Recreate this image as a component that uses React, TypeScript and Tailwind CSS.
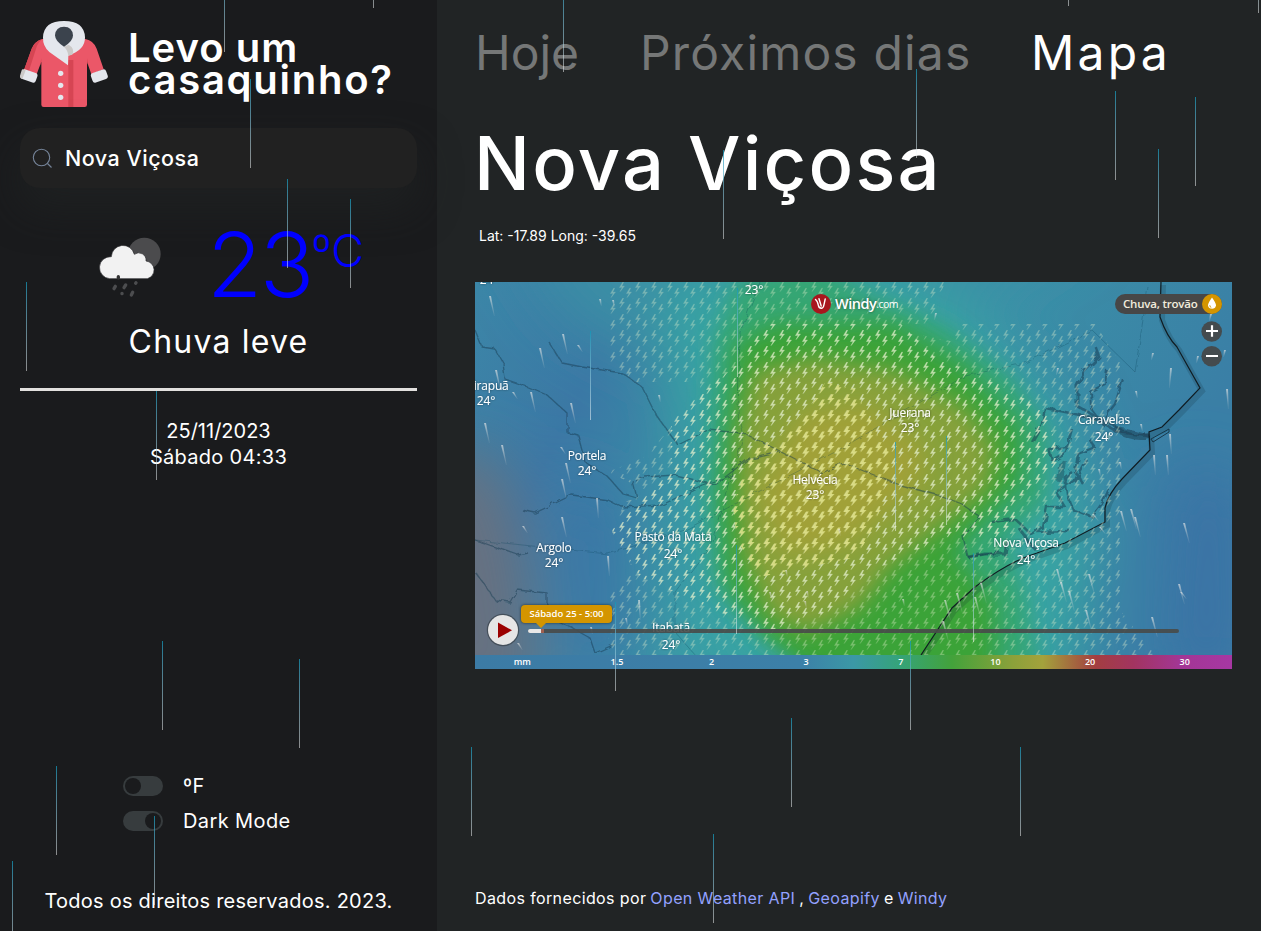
const drops: [number, number][] = [
  [224, -37], [373, -81], [250, 79], [287, 179], [350, 199], [26, 282], [156, 391], [162, 641],
  [299, 659], [56, 766], [154, 816], [12, 861], [563, -17], [916, 69], [1068, -83], [1258, -76],
  [1115, 91], [1195, 97], [1158, 149], [723, 150], [590, 331], [737, 288], [895, 442], [946, 436],
  [736, 545], [615, 602], [973, 553], [910, 641], [791, 718], [471, 747], [1020, 747], [713, 834],
];

function Rain() {
  return (
    <div className="pointer-events-none absolute inset-0 overflow-hidden">
      {drops.map(([x, y]) => (
        <i
          key={`${x}-${y}`}
          className="absolute h-[89px] w-px bg-linear-to-b from-[#0d98ba]/75 to-white/50"
          style={{ left: x, top: y }}
        />
      ))}
    </div>
  );
}

function Coat() {
  return (
    <svg viewBox="30 30 264 264" className="h-[88px] w-[88px] shrink-0">
      <path d="M97 87Q73 95 65 116L42 180L80 193L94 155V284Q94 291 101 291H224Q231 291 231 284V155L244 193L281 178L260 116Q251 92 226 87Z" fill="#eb5768" />
      <path d="M97 87Q73 95 65 116L42 180L56 185L78 116Q83 98 97 87ZM94 145V155L89 170ZM231 145V155L236 170ZM175 150H190V291H175Z" fill="#d64553" />
      <rect x="-24" y="-15" width="48" height="30" rx="8" transform="translate(57 198) rotate(19)" fill="#e4e7ed" />
      <path d="M38 178L47 181L37 207L34 206Q29 203 30 197L35 181Q36 178 38 178Z" fill="#cbc9c8" />
      <rect x="-24" y="-15" width="48" height="30" rx="8" transform="translate(268 198) rotate(-19)" fill="#e4e7ed" />
      <path d="M174 166L118 126Q98 109 99 82Q101 33 162 33Q223 33 225 82Q226 120 175 137Z" fill="#e4e7ed" />
      <path d="M162 110L176 104Q196 116 187 134L175 137V137Q174 122 162 110Z" fill="#cbc9c8" />
      <path d="M162 110Q135 93 135 76Q137 50 162 50Q187 50 189 76Q189 94 162 110Z" fill="#3b434d" />
      <circle cx="152" cy="190" r="8" fill="#e4e7ed" />
      <circle cx="152" cy="226" r="8" fill="#e4e7ed" />
      <circle cx="152" cy="262" r="8" fill="#e4e7ed" />
    </svg>
  );
}

function Cloud() {
  return (
    <svg viewBox="0 0 270 240" className="h-[80px] w-[90px] shrink-0">
      <circle cx="163" cy="87" r="49" fill="#4b4b4d" />
      <path d="M59 161A33 33 0 0 1 64 95A35 35 0 0 1 133 88A22 22 0 0 1 168 108A27 27 0 0 1 172 161Z" fill="#f2f2f2" stroke="#2a2b2d" strokeWidth="2" />
      <g stroke="#4c4d4f" strokeWidth="10" strokeLinecap="round">
        <path d="M76 184L72 191M107 180L102 188M138 173L137 175M96 205V206M128 202L124 210" />
      </g>
      <path d="M85 155L85 159" stroke="#333" strokeWidth="10" strokeLinecap="round" />
    </svg>
  );
}

function Toggle({ on, label }: { on?: boolean; label: string }) {
  return (
    <div className="flex h-[35px] items-center gap-5">
      <span className={on ? "flex h-5 w-10 justify-end rounded-full bg-[#373c3e] p-[2px]" : "flex h-5 w-10 rounded-full bg-[#373c3e] p-[2px]"}>
        <span className="h-4 w-4 rounded-full bg-[#1a1b1d]" />
      </span>
      <span className="text-[20px] tracking-[0.4px]">{label}</span>
    </div>
  );
}

const bolt = "M1-4.8L-2.2.5L.6.3L-1.6 4.6L2.7-.9L0-.7L1.9-4.8Z";
const bigBolt = "M.6-5L-3.2.9L-.3.9L-2.2 5.4L3.8-1.3L1-1.3L3-5Z";

const streaks: [number, number, number][] = [
  [15, 14, 1], [88, 52, 1], [103, 63, 0], [125, 17, 0], [21, 88, 1], [38, 110, 0], [65, 66, 1], [56, 110, 1],
  [96, 121, 1], [10, 141, 1], [27, 163, 1], [86, 165, 0], [91, 181, 1], [138, 18, 0], [87, 197, 1], [122, 216, 1],
  [87, 235, 1], [48, 244, 0], [133, 274, 1], [164, 318, 1], [151, 336, 0], [116, 345, 0], [43, 361, 0], [184, 113, 0],
  [330, 319, 0], [295, 310, 0], [332, 309, 0], [311, 288, 0], [364, 247, 0], [428, 317, 0], [470, 318, 1], [482, 311, 1],
  [506, 301, 1], [500, 315, 1], [468, 339, 1], [582, 287, 1], [586, 300, 1], [594, 309, 1], [614, 292, 1], [611, 328, 1],
  [646, 229, 1], [656, 227, 1], [660, 235, 1], [709, 241, 1], [704, 302, 1], [706, 310, 0], [677, 335, 1], [618, 232, 0],
  [625, 245, 0], [624, 187, 0], [645, 180, 0], [679, 173, 1], [692, 173, 1], [695, 152, 1], [666, 142, 0], [661, 109, 0],
  [678, 71, 0], [696, 86, 1], [723, 74, 0], [752, 107, 1], [750, 68, 0], [461, 31, 0], [583, 86, 0], [736, 32, 0],
];

function MapLabel({ name, x, y, t = 24, gap = 15 }: { name?: string; x: number; y: number; t?: number; gap?: number }) {
  return (
    <>
      {name && <text x={x} y={y}>{name}</text>}
      <text x={x} y={y + gap}>{t}°</text>
    </>
  );
}

function MapCanvas() {
  return (
    <svg viewBox="0 0 757 373" className="block h-[373px] w-[757px]">
      <defs>
        <filter id="b10" x="-30%" y="-30%" width="160%" height="160%"><feGaussianBlur stdDeviation="11" /></filter>
        <filter id="b14" x="-30%" y="-30%" width="160%" height="160%"><feGaussianBlur stdDeviation="13" /></filter>
        <filter id="b30" x="-50%" y="-50%" width="200%" height="200%"><feGaussianBlur stdDeviation="30" /></filter>
        <filter id="ts" x="-30%" y="-50%" width="160%" height="200%"><feDropShadow dx="0" dy="0" stdDeviation=".9" floodColor="#000" floodOpacity=".5" /></filter>
        <filter id="rough" x="-5%" y="-5%" width="110%" height="110%"><feTurbulence type="fractalNoise" baseFrequency=".12" numOctaves="2" /><feDisplacementMap in="SourceGraphic" scale="6" /></filter>
        <pattern id="small" width="16" height="16" patternUnits="userSpaceOnUse">
          <path d={bolt} transform="translate(2.7 5)" fill="#e6f0cd" stroke="#e6f0cd" strokeWidth=".35" />
          <path d={bolt} transform="translate(9.7 11)" fill="#e6f0cd" stroke="#e6f0cd" strokeWidth=".35" />
        </pattern>
        <pattern id="large" width="16" height="16" patternUnits="userSpaceOnUse">
          <path d={bigBolt} transform="translate(3.7 5.2)" fill="#e3e58d" />
          <path d={bigBolt} transform="translate(10.7 10.6)" fill="#e3e58d" />
        </pattern>
        <linearGradient id="streak" x1="0" y1="0" x2="0" y2="1"><stop offset="0" stopColor="#e8e8e8" stopOpacity=".65" /><stop offset="1" stopColor="#d0d0d0" stopOpacity=".08" /></linearGradient>
        <linearGradient id="sea" x1="0" y1="0" x2="1" y2=".25"><stop offset="0" stopColor="#3c86a7" /><stop offset=".2" stopColor="#3b78a5" /><stop offset=".5" stopColor="#3b99a7" /><stop offset="1" stopColor="#3a7fa6" /></linearGradient>
      </defs>
      <rect width="757" height="373" fill="url(#sea)" />
      <g filter="url(#b30)">
        <path d="M-60 170L20 170L50 260L70 430L-60 430Z" fill="#687180" />
        <path d="M30 -60H620L430 45L230 110L90 35Z" fill="#3a8ea5" />
        <path d="M80 180L140 220L150 400L100 400Z" fill="#3b73a6" />
        <path d="M700 180L770 200V400L690 400Z" fill="#3a72a5" />
        <path d="M190 -10H440L590 130L620 250L600 420H240L215 300L200 120Z" fill="#39a4a3" />
      </g>
      <path d="M262 0L340 -20L400 15L470 45L535 95L572 150L570 220L530 260L550 310L562 390L350 400L285 350L240 300L233 210L240 60Z" fill="#34a673" filter="url(#b10)" />
      <path d="M262 62L300 42L420 42L490 85L544 145L545 200L505 240L480 270L520 320L520 400H345L295 355L256 310L246 220Z" fill="#3ba337" filter="url(#b10)" />
      <path d="M278 88L340 76L420 88L490 125L520 165L512 208L460 250L415 285L385 325L335 350L295 335L268 270L262 160Z" fill="#86a13a" filter="url(#b10)" />
      <path d="M325 130L390 120L450 165L445 205L370 265L310 275L280 215Z" fill="#a1a139" filter="url(#b14)" />
      <g stroke="#173b50" strokeLinejoin="round" fill="none" filter="url(#rough)">
        <g opacity=".48" strokeWidth="1.3">
          <path d="M0 48L7 65L20 67L28 81L30 97L50 104L72 113L92 131L92 150L103 153L110 180L133 195L148 212L162 216L158 200L170 195L200 193L240 203L272 178L305 170" />
          <path d="M74 60L87 81L107 85L147 91L167 105L180 131L203 163L233 148L267 151L307 170L347 191L368 181L425 203L462 213L488 223L505 235L488 255L493 275L525 270" />
          <path d="M47 228L60 231L97 213L133 218L147 225L187 223L227 203L258 193" />
          <path d="M0 258L43 273L53 271M0 290L10 303L20 318L35 320L42 308L72 311L72 321L83 340L97 346L115 356L120 371L140 362" />
        </g>
        <path d="M285 0L265 50L263 130L268 155L238 260L200 310L200 350L220 373M0 258L133 272L210 248L360 170L490 94L550 81L617 48L660 90L673 5" opacity=".25" />
        <g opacity=".5" strokeWidth="3">
          <path d="M620 64L624 75L609 90L602 104L602 124L612 130L645 147L674 154" />
          <path d="M632 88L630 102L616 109L617 128L630 145" strokeWidth="2" />
          <path d="M648 97L640 122L630 135M570 126L600 132L621 137L642 150L674 154M570 126L567 142L557 160" strokeWidth="2.4" />
          <path d="M597 147L592 165L574 167L577 178L591 170L596 148M614 157L620 165L603 172L600 190L609 203M597 190L590 195L592 212L599 230" strokeWidth="2.4" />
          <path d="M611 177L600 198L581 210L590 225L572 225L568 245L556 252L540 237L517 240M599 228L617 235L628 220L634 207M562 250L595 249" strokeWidth="2.4" />
          <path d="M493 275L510 272L530 272L532 260M545 247L555 262L562 269" />
        </g>
        <path d="M640 147Q659 158 674 154" strokeWidth="6" opacity=".5" />
        <path d="M588 178L585 200" strokeWidth="6" opacity=".4" />
      </g>
      <path d="M686 0L685 35Q692 55 702 65L725 106L704 128L687 145L674 150L675 168L647 197Q633 212 630 226L630 240L590 261L562 271Q535 279 500 305L477 326L446 373" fill="none" stroke="#102733" strokeWidth="6" opacity=".18" transform="translate(2 3)" />
      <path d="M686 0L685 35Q692 55 702 65L725 106L704 128L687 145L674 150L675 168L647 197Q633 212 630 226L630 240L590 261L562 271Q535 279 500 305L477 326L446 373" fill="none" stroke="#101c22" strokeWidth="1.2" />
      <path d="M676 157L694 147L694 150L678 160Z" fill="none" stroke="#17384a" />
      <g opacity=".38">
        <path d="M135 0H470L455 42H415L430 50L480 60L480 42H620L645 80V328L680 373H140L133 355V310L160 290L137 250L150 220L175 210L133 190L170 175L196 145L225 118V100H160L135 80Z" fill="url(#small)" />
      </g>
      <path d="M286 42H426L460 75L520 100L573 130L585 185L545 215L535 255L470 255L405 285L355 330L290 350L165 295L137 248L196 190L196 140L222 115L265 80ZM350 100L340 118L312 150L275 171L258 225L262 258L285 295L382 275L402 238L417 175L404 155L380 107Z" fillRule="evenodd" fill="url(#small)" opacity=".65" />
      <path d="M350 100L380 107L404 155L417 175L402 238L382 275L285 295L262 258L258 225L275 171L312 150L340 118Z" fill="url(#large)" opacity=".8" />
      {streaks.map(([x, y, long], i) => {
        const lean = x < 110 ? 4 : x > 450 && y > 210 ? 5 : x > 450 && y < 100 ? -2 : 1;
        const h = long ? 20 : 7;
        return <path key={i} d={`M${x - 1} ${y}H${x + 1}L${x + lean + 0.8} ${y + h}H${x + lean}Z`} fill="url(#streak)" />;
      })}
      <g fill="#fff" fontSize="12" textAnchor="middle" letterSpacing="-.2" fontFamily='"Open Sans", "Noto Sans", sans-serif' filter="url(#ts)">
        <MapLabel name="Ibirapuã" x={11} y={108} />
        <MapLabel name="Portela" x={112} y={178} />
        <MapLabel name="Argolo" x={79} y={270} />
        <MapLabel name="Juerana" x={435} y={135} t={23} />
        <MapLabel name="Helvécia" x={340} y={202} t={23} />
        <MapLabel x={279} y={-3} t={23} />
        <MapLabel x={14} y={-13} />
        <MapLabel name="Itabatã" x={196} y={350} gap={17} />
        <MapLabel name="Pasto da Mata" x={198} y={259} gap={17} />
        <MapLabel name="Caravelas" x={629} y={142} gap={17} />
        <MapLabel name="Nova Viçosa" x={551} y={265} gap={17} />
      </g>
    </svg>
  );
}

function WeatherMap() {
  return (
    <div className="relative h-[387px] w-[757px] overflow-hidden font-['Open_Sans','Noto_Sans',sans-serif]">
      <MapCanvas />
      <div className="grid h-[14px] grid-cols-8 bg-[linear-gradient(90deg,#3c7ba5_0%,#3c80a8_43%,#3b98a6_50%,#35a37a_56%,#43a23b_63%,#8ba13a_71%,#a4a23c_75%,#a33e41_82%,#a23460_87%,#a33694_93%,#a737a3_100%)] text-center text-[9px] font-semibold leading-[14px]">
        {["mm", "1.5", "2", "3", "7", "10", "20", "30"].map((v) => <span key={v}>{v}</span>)}
      </div>

      <div className="absolute left-[336px] top-3 flex items-center">
        <svg viewBox="0 0 20 20" className="h-5 w-5">
          <circle cx="10" cy="10" r="10" fill="#a8161d" />
          <path d="M4.5 5.5Q6.6 7 7.4 11.5Q8 14.4 10.6 14.2Q12.6 14 13 10.5L14.2 5M8 4.7Q9 8 10.2 12" fill="none" stroke="#fff" strokeWidth="1.4" strokeLinecap="round" />
        </svg>
        <span className="ml-1 text-[14.5px] font-semibold leading-5 tracking-[-0.5px] [text-shadow:0_0_3px_#0008]">Windy</span>
        <span className="text-[10.5px] leading-5 tracking-[-0.5px]">.com</span>
      </div>

      <div className="absolute left-[640px] top-3 flex h-5 w-[107px] items-center justify-between rounded-full bg-[#474747] pl-2 text-[11.5px] font-semibold text-[#f2ecdc]">
        <span className="whitespace-nowrap tracking-[-0.2px]">Chuva, trovão</span>
        <svg viewBox="0 0 20 20" className="h-5 w-5">
          <circle cx="10" cy="10" r="10" fill="#d49500" />
          <path d="M10 3.5Q14 9 14 11.5A4.1 4.1 0 0 1 6 11.5Q6 9 10 3.5Z" fill="#fff" />
          <path d="M7.8 11.3Q7.9 13 9.3 13.6" stroke="#d49500" fill="none" />
        </svg>
      </div>
      <svg viewBox="0 0 21 46" className="absolute left-[726px] top-[39px] h-[46px] w-[21px]">
        <circle cx="10.7" cy="10.5" r="10.3" fill="#444b4e" />
        <circle cx="10.7" cy="35.3" r="10.3" fill="#444b4e" />
        <path d="M5 10H17M11 4.2V15.8M5 35H17" stroke="#fff" strokeWidth="2.2" />
      </svg>

      <div className="absolute left-[53px] top-[347px] h-1 w-[651px] rounded-full bg-[#484a49]/90">
        <div className="h-1 w-4 rounded-l-full border-r-[3px] border-[#a06050] bg-[#e8e8e8]" />
      </div>
      <svg viewBox="0 0 34 34" className="absolute left-[11px] top-[331px] h-[34px] w-[34px]">
        <circle cx="17" cy="17" r="16.2" fill="#303840" opacity=".6" />
        <circle cx="17" cy="17" r="15" fill="#e5e5e5" />
        <path d="M12 9.5L26 17.3L12 25Z" fill="#9b0000" />
      </svg>
      <div className="absolute left-[46px] top-[323px] flex h-[18px] w-[91px] items-center justify-center rounded-[4px] bg-[#d49500] text-[9.5px] font-semibold shadow-[0_0_3px_#0009]">
        Sábado 25 - 5:00
        <span className="absolute left-[15px] top-[18px] border-x-[5px] border-t-[5px] border-x-transparent border-t-[#d49500]" />
      </div>
    </div>
  );
}

export default function App() {
  return (
    <div className="relative flex h-[931px] w-[1261px] overflow-hidden bg-[#212425] font-['Inter',sans-serif] text-white">
      <aside className="flex w-[437px] shrink-0 flex-col bg-[#1a1b1d] px-5 pt-5">
        <header className="flex h-[88px] items-center gap-5">
          <Coat />
          <h1 className="text-[40px] font-semibold leading-8">
            <span className="block tracking-[1px]">Levo um</span>
            <span className="block tracking-[1.75px]">casaquinho?</span>
          </h1>
        </header>

        <div className="mt-5 flex h-[60px] items-center rounded-[20px] bg-[#212121] pl-3 shadow-[0_20px_40px_rgba(34,36,37,0.6)]">
          <svg viewBox="0 0 20 20" className="h-5 w-5" fill="none" stroke="#76859a" strokeWidth="1.1">
            <circle cx="9.5" cy="9.5" r="8.2" />
            <path d="M15.5 15.5L19.5 19.5" />
          </svg>
          <span className="ml-[13px] text-[21.5px] font-medium tracking-[0.5px]">Nova Viçosa</span>
        </div>

        <section className="flex h-[203px] flex-col items-center border-b-[3px] border-[#e2e0de] pt-[33px]">
          <div className="flex h-[97px] w-full items-start pl-[70px]">
            <div className="pt-1"><Cloud /></div>
            <div className="flex pl-[27px] font-light text-[blue]">
              <span className="text-[90px] leading-[88px] tracking-[-2.5px]">23</span>
              <span className="pt-2 text-[45px] leading-[44px]">ºC</span>
            </div>
          </div>
          <p className="text-[32px] leading-[48px] tracking-[1.2px]">Chuva leve</p>
        </section>

        <div className="pt-[27px] text-center text-[20px] leading-[26px]">
          <p>25/11/2023</p>
          <p className="tracking-[0.3px]">Sábado 04:33</p>
        </div>

        <div className="mt-auto pl-[103px]">
          <Toggle label="ºF" />
          <Toggle on label="Dark Mode" />
        </div>
        <footer className="mb-[15px] mt-[48px] whitespace-nowrap text-center text-[20px] leading-[30px] tracking-[0.25px]">
          Todos os direitos reservados. 2023.
        </footer>
      </aside>

      <main className="flex flex-1 flex-col pl-[38px] pt-[23px]">
        <nav className="flex h-[60px] items-center text-[48px] leading-[60px] text-[#757777]">
          <span className="w-[165px]">Hoje</span>
          <span className="w-[391px] whitespace-nowrap tracking-[1.15px]">Próximos dias</span>
          <span className="tracking-[3.2px] text-white">Mapa</span>
        </nav>
        <h2 className="-ml-px mt-[30px] text-[74px] font-[480] leading-[100px] tracking-[2.2px]">Nova Viçosa</h2>
        <p className="mb-[36px] mt-[13px] pl-1 text-[14px] leading-5">Lat: -17.89 Long: -39.65</p>
        <WeatherMap />
        <p className="mb-[21px] mt-auto flex gap-1 text-[16px] leading-6 tracking-[0.38px]">
          <span>Dados fornecidos por</span>
          <a className="text-[#93a1ff]">Open Weather API</a>
          <span>,</span>
          <a className="text-[#93a1ff]">Geoapify</a>
          <span>e</span>
          <a className="text-[#93a1ff]">Windy</a>
        </p>
      </main>
      <Rain />
    </div>
  );
}
